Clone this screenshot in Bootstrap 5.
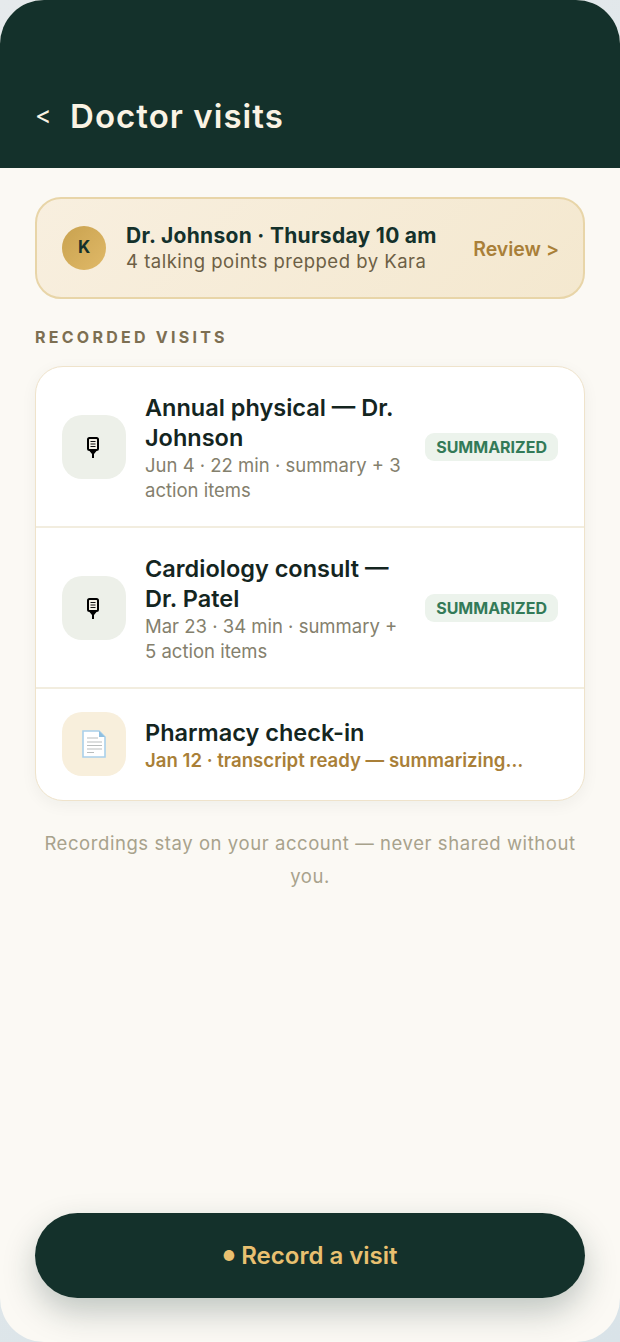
<!DOCTYPE html>
<html lang="en">
<head>
  <title>Doctor visits</title>
  <meta name="viewport" content="width=device-width, initial-scale=1.0">
  <link rel="stylesheet" href="https://cdn.jsdelivr.net/npm/bootstrap@5.3.0/dist/css/bootstrap.min.css">
  <style>
    body { background: linear-gradient(135deg, #e6eaec, #d9e3e8); font-family: Inter, "Liberation Sans", sans-serif; color: #14312b; }
    .phone { width: 620px; height: 1342px; background: #fbf9f4; border-radius: 44px; overflow: hidden; }
    .top-bar { height: 168px; background: #14312b; padding: 0 35px 34px; color: #faf3e4; }
    .back-link { width: 35px; font-size: 25px; line-height: 36px; font-weight: 400; padding-bottom: 1px; }
    .page-title { font-size: 33px; font-weight: 600; margin: 0; line-height: 36px; letter-spacing: 1.05px; }
    .content { padding: 29px 35px 0; }
    .next-visit { height: 102px; border: 2px solid #e8d5a8; border-radius: 26px; background: linear-gradient(135deg, #f8efdf, #f4e8cf); padding: 0 24px 0 25px; }
    .avatar-k { width: 44px; height: 44px; border-radius: 50%; background: linear-gradient(135deg, #c9a24f, #e0b968); font-size: 17px; font-weight: 700; margin-right: 20px; }
    .next-title { font-size: 21px; font-weight: 700; line-height: 26px; letter-spacing: .3px; }
    .next-sub { font-size: 18.500px; line-height: 24px; color: #6d5f45; letter-spacing: .5px; }
    .review-link { font-size: 19.500px; font-weight: 600; color: #a97f38; padding-top: 3px; }
    .section-label { font-size: 16px; font-weight: 700; letter-spacing: 3.25px; color: #7d6f52; margin: 28px 0 19px; line-height: 20px; }
    .visit-list { background: #fff; border: 1.5px solid #efe3cb; border-radius: 28px; box-shadow: 0 4px 16px rgba(20,49,43,.05); overflow: hidden; }
    .visit-row { padding: 24px 26px 23px; border-bottom: 2px solid #f2eddf; }
    .visit-row:last-child { border-bottom: 0; padding: 23px 26px 24px; }
    .tile { width: 64px; height: 64px; border-radius: 20px; flex: none; margin-right: 19px; }
    .tile-green { background: #edf0e9; }
    .tile-tan { background: #f8efdc; }
    .mic-glyph { margin-right: 2px; }
    .visit-text { padding-top: 2px; }
    .visit-title { font-size: 23.500px; font-weight: 600; line-height: 30px; color: #14251f; }
    .visit-meta { font-size: 18.500px; line-height: 25px; color: #84806d; }
    .visit-meta-busy { font-size: 18.600px; line-height: 24px; color: #a97f38; font-weight: 600; white-space: nowrap; }
    .done-tag { background: #ecf3ec; color: #337a58; font-size: 16px; font-weight: 700; border-radius: 9px; padding: 3px 11px; line-height: 22px; flex: none; margin-left: 20px; }
    .privacy-note { text-align: center; font-size: 18.500px; letter-spacing: .57px; line-height: 33px; color: #a8a28c; margin: 26px 0 0; }
    .record-btn { width: 550px; height: 85px; border-radius: 43px; background: #14312b; color: #e9c070; font-size: 24px; font-weight: 600; border: 0; box-shadow: 0 14px 32px rgba(20,49,43,.25); margin: auto 35px 44px; }
    .record-dot { font-size: 14px; vertical-align: 3px; }
  </style>
</head>
<body class="m-0">
  <div class="phone d-flex flex-column">
    <div class="top-bar d-flex align-items-end">
      <span class="back-link">&lt;</span>
      <h1 class="page-title">Doctor visits</h1>
    </div>
    <div class="content">
      <div class="next-visit d-flex align-items-center">
        <div class="avatar-k d-flex align-items-center justify-content-center flex-shrink-0">K</div>
        <div class="flex-grow-1">
          <div class="next-title">Dr. Johnson · Thursday 10 am</div>
          <div class="next-sub">4 talking points prepped by Kara</div>
        </div>
        <div class="review-link">Review &gt;</div>
      </div>
      <div class="section-label">RECORDED VISITS</div>
      <div class="visit-list">
        <div class="visit-row d-flex align-items-center">
          <div class="tile tile-green d-flex align-items-center justify-content-center">
            <svg class="mic-glyph" width="12" height="21" viewBox="0 0 12 21"><rect x="1" y="1" width="10" height="12" rx="1.500" fill="#f4f1e6" stroke="#000" stroke-width="2"/><path d="M3.500 4.500h5M3.500 7h5M3.500 9.500h5" stroke="#111" stroke-width="1.200"/><path d="M2.500 14h7L7 17v4H5v-4z" fill="#000"/></svg>
          </div>
          <div class="flex-grow-1 visit-text">
            <div class="visit-title">Annual physical — Dr. Johnson</div>
            <div class="visit-meta">Jun 4 · 22 min · summary + 3 action items</div>
          </div>
          <span class="done-tag">SUMMARIZED</span>
        </div>
        <div class="visit-row d-flex align-items-center">
          <div class="tile tile-green d-flex align-items-center justify-content-center">
            <svg class="mic-glyph" width="12" height="21" viewBox="0 0 12 21"><rect x="1" y="1" width="10" height="12" rx="1.500" fill="#f4f1e6" stroke="#000" stroke-width="2"/><path d="M3.500 4.500h5M3.500 7h5M3.500 9.500h5" stroke="#111" stroke-width="1.200"/><path d="M2.500 14h7L7 17v4H5v-4z" fill="#000"/></svg>
          </div>
          <div class="flex-grow-1 visit-text">
            <div class="visit-title">Cardiology consult — Dr. Patel</div>
            <div class="visit-meta">Mar 23 · 34 min · summary + 5 action items</div>
          </div>
          <span class="done-tag">SUMMARIZED</span>
        </div>
        <div class="visit-row d-flex align-items-center">
          <div class="tile tile-tan d-flex align-items-center justify-content-center">
            <svg width="24" height="28" viewBox="0 0 24 28"><path d="M1 1h16l6 6v20H1z" fill="#fff" stroke="#a9d0ea" stroke-width="1.600"/><path d="M17 1l6 6h-6z" fill="#8fbfe0"/><path d="M5 8h11M5 12h15M5 15.500h15M5 19h15M5 22.500h7" stroke="#b9bdbd" stroke-width="1.200"/></svg>
          </div>
          <div class="flex-grow-1 visit-text">
            <div class="visit-title">Pharmacy check-in</div>
            <div class="visit-meta-busy">Jan 12 · transcript ready — summarizing…</div>
          </div>
        </div>
      </div>
      <p class="privacy-note">Recordings stay on your account — never shared without you.</p>
    </div>
    <button class="record-btn" type="button"><span class="record-dot">●</span> Record a visit</button>
  </div>
  <script src="https://cdn.jsdelivr.net/npm/bootstrap@5.3.0/dist/js/bootstrap.bundle.min.js"></script>
</body>
</html>
